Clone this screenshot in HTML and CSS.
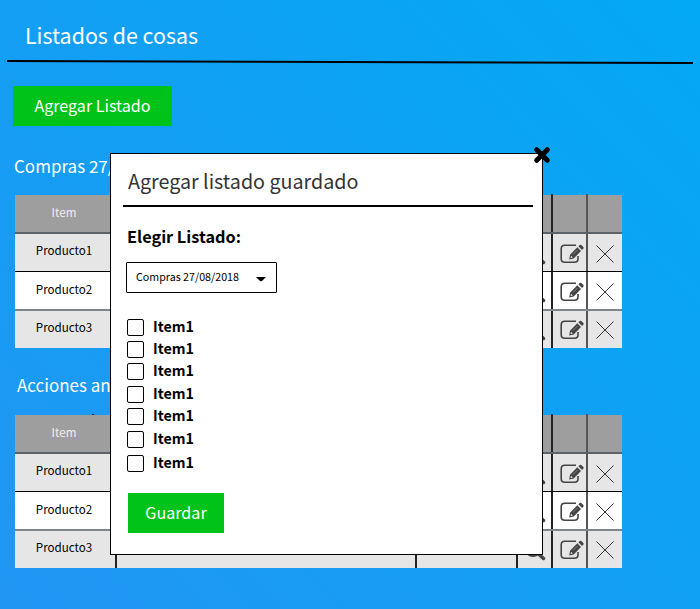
FILE: index.html
```html
<!DOCTYPE html>
<html lang="es">
<head>
<meta charset="utf-8">
<title>Listados de cosas</title>
<link rel="stylesheet" href="styles.css">
</head>
<body>
<svg class="defs" width="0" height="0" aria-hidden="true">
  <symbol id="edit" viewBox="0 0 26 22">
    <path d="M17 2.200H5.800Q2.200 2.200 2.200 5.800V15.700Q2.200 19.200 5.800 19.200H15.500Q19 19.200 19 15.700V13" fill="none" stroke="#444" stroke-width="1.600"/>
    <path d="M10.200 16.500L11 11.700L18.300 4.300L22 8L14.700 15.500Z" fill="#444"/>
    <path d="M19.400 3.300L20.700 2Q21.500 1.300 22.300 2L24.400 4Q25 4.800 24.400 5.500L23 6.900Z" fill="#444"/>
    <path d="M12 12.800L13.800 14.500L11.600 15.100Z" fill="#eee"/>
    <path d="M14 11.500L18.500 7" fill="none" stroke="#aaa" stroke-width=".6"/>
  </symbol>
  <symbol id="remove" viewBox="0 0 18 18">
    <path d="M.5 .5L17.500 17.500M17.500 .5L.5 17.500" fill="none" stroke="#333" stroke-width="1"/>
  </symbol>
  <symbol id="search" viewBox="0 0 22 22">
    <circle cx="9" cy="9" r="7" fill="none" stroke="#444" stroke-width="2"/>
    <path d="M14 13.500L19.500 18.500" stroke="#444" stroke-width="3.500" stroke-linecap="round"/>
  </symbol>
</svg>
<main class="page">
  <header class="page-header">
    <h1>Listados de cosas</h1>
    <svg class="rule" viewBox="0 0 686 4"><path d="M0 1L686 3" stroke="#000" stroke-width="2"/></svg>
  </header>
  <button class="button add">Agregar Listado</button>
  <section class="list">
    <h2>Compras 27/</h2>
    <div class="table">
      <div class="row head"><span>Item</span><span></span><span></span><span></span><span></span><span></span></div>
      <div class="row"><span>Producto1</span><span></span><span></span><span><svg class="search"><use href="#search"/></svg></span><span><svg class="edit"><use href="#edit"/></svg></span><span><svg class="remove"><use href="#remove"/></svg></span></div>
      <div class="row"><span>Producto2</span><span></span><span></span><span><svg class="search"><use href="#search"/></svg></span><span><svg class="edit"><use href="#edit"/></svg></span><span><svg class="remove"><use href="#remove"/></svg></span></div>
      <div class="row"><span>Producto3</span><span></span><span></span><span><svg class="search"><use href="#search"/></svg></span><span><svg class="edit"><use href="#edit"/></svg></span><span><svg class="remove"><use href="#remove"/></svg></span></div>
    </div>
  </section>
  <section class="list second">
    <h2>Acciones an</h2>
    <div class="table">
      <div class="row head"><span>Item</span><span></span><span></span><span></span><span></span><span></span></div>
      <div class="row"><span>Producto1</span><span></span><span></span><span><svg class="search"><use href="#search"/></svg></span><span><svg class="edit"><use href="#edit"/></svg></span><span><svg class="remove"><use href="#remove"/></svg></span></div>
      <div class="row"><span>Producto2</span><span></span><span></span><span><svg class="search"><use href="#search"/></svg></span><span><svg class="edit"><use href="#edit"/></svg></span><span><svg class="remove"><use href="#remove"/></svg></span></div>
      <div class="row"><span>Producto3</span><span></span><span></span><span><svg class="search"><use href="#search"/></svg></span><span><svg class="edit"><use href="#edit"/></svg></span><span><svg class="remove"><use href="#remove"/></svg></span></div>
    </div>
  </section>
</main>
<div class="modal" role="dialog">
  <svg class="close" viewBox="0 0 18 18"><path d="M3.700 3.700L14.300 14.300M14.300 3.700L3.700 14.300" stroke="#000" stroke-width="5" stroke-linecap="round"/></svg>
  <h2 class="modal-title">Agregar listado guardado</h2>
  <h3>Elegir Listado:</h3>
  <div class="select"><span>Compras 27/08/2018</span><svg class="caret" viewBox="0 0 10 5"><path d="M0 0H10L6 4Q5 4.600 4 4Z"/></svg></div>
  <ul class="items">
    <li><i class="box"></i>Item1</li>
    <li><i class="box"></i>Item1</li>
    <li><i class="box"></i>Item1</li>
    <li><i class="box"></i>Item1</li>
    <li><i class="box"></i>Item1</li>
    <li><i class="box"></i>Item1</li>
    <li><i class="box"></i>Item1</li>
  </ul>
  <button class="button save">Guardar</button>
</div>
</body>
</html>
```
FILE: styles.css
```css
* { box-sizing: border-box; margin: 0; padding: 0; }
body {
  width: 700px;
  height: 609px;
  overflow: hidden;
  position: relative;
  font-family: "Noto Sans CJK SC", "Noto Sans", sans-serif;
  background: linear-gradient(45deg, #2196f3, #03a9f4);
}
.defs { position: absolute; }
.page { display: flex; flex-direction: column; align-items: flex-start; }
.page-header { height: 64px; padding: 20px 7px 0; }
h1 { padding-left: 18px; height: 40px; font-size: 21.400px; line-height: 29px; font-weight: 400; color: #fff; }
.rule { display: block; width: 686px; height: 4px; }
.button {
  display: block;
  border: 0;
  border-radius: 0;
  background: #00c31a;
  color: #fff;
  font: 400 16.100px/38px "Noto Sans CJK SC", "Noto Sans", sans-serif;
  height: 40px;
  padding-bottom: 2px;
  text-align: center;
}
.add { width: 159px; margin: 22px 0 0 13px; }
.list { margin: 27px 0 0 15px; }
.list h2 { font-size: 17px; line-height: 26px; height: 42px; font-weight: 400; color: #fff; margin-left: -1px; }
.list.second { margin-top: 24px; }
.second h2 { height: 43px; margin-left: 2px; }
.table { width: 607px; height: 153px; display: grid; grid-template-rows: 39px 38px 39px 37px; }
.row { display: grid; grid-template-columns: 102px 300px 101px 35px 35px 34px; background: #e6e6e6; font-size: 11.600px; border-bottom: 1px solid #000; }
.row:nth-child(3) { background: #fff; border-bottom: 2px solid #7d868d; }
.row:last-child { border-bottom: 0; }
.row.head { background: #9e9e9e; color: #eee; border-bottom: 2px solid #5c6266; position: relative; }
.second .head::before { content: ""; position: absolute; left: 77px; top: -1px; width: 2px; height: 1px; background: #222; }
.row span { display: flex; align-items: center; justify-content: center; border-right: 2px solid #222; line-height: 30px; }
.row span:first-child { padding: 0 2px 6px 0; }
.row:nth-child(3) span:first-child { padding-bottom: 4px; }
.row.head span { margin-top: -1px; }
.row.head span:first-child { padding-bottom: 2px; }
.row span:nth-child(5) { border-color: #555; }
.row span:last-child { border-right: 0; }
.row:last-child span:nth-child(n+4) { padding-bottom: 2px; }
.edit { width: 26px; height: 22px; margin: 3px 0 0 4px; }
.remove { width: 18px; height: 18px; margin: 3px 0 0; }
.search { width: 22px; height: 22px; margin-top: 4px; }
.modal {
  position: absolute;
  left: 110px;
  top: 153px;
  width: 433px;
  height: 402px;
  background: #fff;
  border: 1px solid #000;
  padding: 12px 9px 0 12px;
}
.close { position: absolute; right: -9px; top: -8px; width: 18px; height: 18px; }
.modal-title { height: 41px; padding-left: 5px; border-bottom: 2px solid #000; font-size: 19.700px; line-height: 29px; font-weight: 400; color: #333; }
.modal h3 { margin: 17px 0 0 4px; font-size: 16.300px; line-height: 24px; font-weight: 700; }
.select { margin: 14px 0 0 3px; width: 151px; height: 31px; border: 1px solid #000; border-radius: 1px; display: flex; align-items: center; justify-content: space-between; padding: 0 10px 0 9px; font-size: 10.700px; }
.select span { line-height: 24px; margin-bottom: 2px; }
.caret { width: 10px; height: 5px; margin-top: 4px; }
.items { list-style: none; margin: 23px 0 0 4px; display: grid; grid-template-rows: 22px 22px 23px 22px 23px 24px 22px; }
.items li { display: flex; align-items: flex-start; gap: 9px; margin-top: 3px; font-size: 14.300px; line-height: 13px; font-weight: 700; }
.box { width: 17px; height: 17px; border: 1px solid #000; border-radius: 2px; }
.save { width: 96px; margin: 19px 0 0 5px; }
```
